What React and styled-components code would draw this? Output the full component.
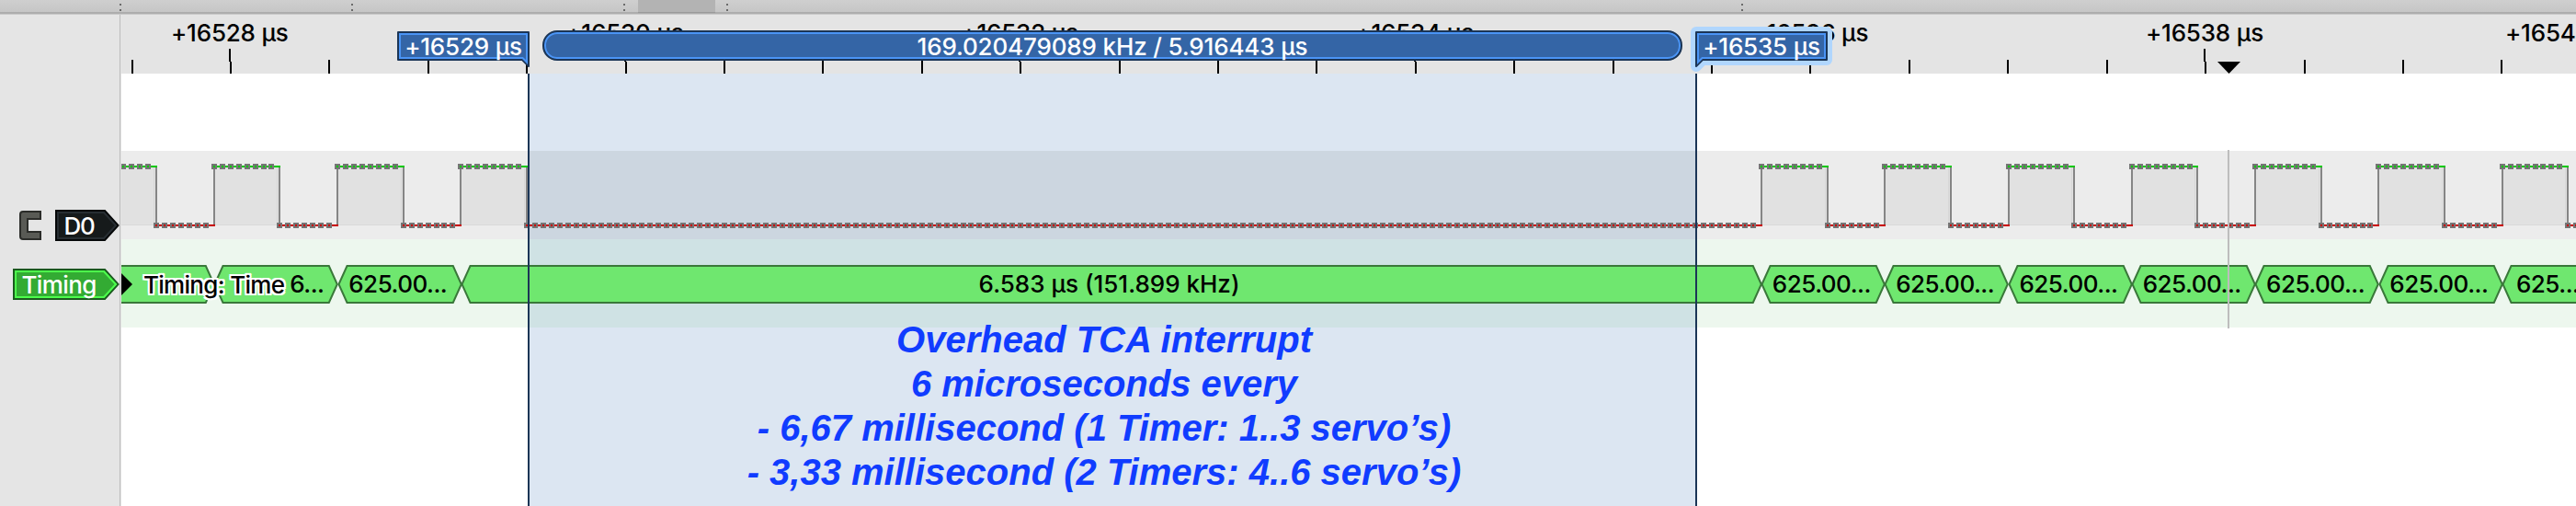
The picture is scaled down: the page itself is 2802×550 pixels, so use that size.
import React from "react";
import styled, { createGlobalStyle } from "styled-components";

const Global = createGlobalStyle`
  * { box-sizing: border-box; }
  html, body { margin: 0; padding: 0; background: #fff; overflow: hidden; }
  body { font-family: Inter, "Liberation Sans", sans-serif; font-size: 26px; color: #000; }
`;

/* Time scale, in pixels of the plot area (which begins right of the sidebar) */
const SIDEBAR = 132;
const SAMPLE_ORIGIN = 232.8 - 11 * 8.953 - SIDEBAR;
const sampleX = (k) => SAMPLE_ORIGIN + k * 8.953;
const TICK = 107.41;
const EDGES = [0, 4, 11, 19, 26, 34, 41, 49, 199, 207, 214, 222, 229, 237, 244, 252, 259, 267, 274, 282, 289, 297, 304];

const Page = styled.div`
  width: 2802px;
  height: 550px;
  display: flex;
  flex-direction: column;
  overflow: hidden;
`;

const Overview = styled.div`
  position: relative;
  flex: none;
  height: 16px;
  background: linear-gradient(#cfcfcf, #c6c6c6 13px, #adadad 13px, #adadad 15px, #c9c9c9 15px);
  svg { display: block; }
`;

const Body = styled.div`
  flex: 1;
  display: flex;
  min-height: 0;
`;

const Sidebar = styled.div`
  flex: none;
  width: ${SIDEBAR}px;
  padding-top: 212px;
  background: #e5e5e5;
  box-shadow: inset -1px 0 #e3e3e3, inset -2px 0 #bdbdbd;
  display: flex;
  flex-direction: column;
  gap: 30px;
`;

const SideRow = styled.div`
  display: flex;
  align-items: center;
  height: 34px;
  padding-left: ${(p) => p.$indent}px;
  gap: 14px;
`;

const Tag = styled.div`
  position: relative;
  width: ${(p) => p.$width}px;
  height: 34px;
  padding-left: ${(p) => p.$pad}px;
  color: #fff;
  font-weight: 500;
  font-size: 26px;
  line-height: 35px;
  letter-spacing: ${(p) => p.$spacing || 0}px;
  white-space: nowrap;
`;

const Backdrop = styled.svg`
  position: absolute;
  inset: 0;
  overflow: visible;
  z-index: 0;
`;

const Over = styled.span`
  position: relative;
  z-index: 1;
`;

const Plot = styled.div`
  position: relative;
  flex: 1;
  min-width: 0;
  overflow: hidden;
  display: flex;
  flex-direction: column;
`;

const Ruler = styled.div`
  position: relative;
  flex: none;
  height: 64px;
  background: #e4e4e4;
`;

const RulerLabels = styled.div`
  display: flex;
  margin-left: -97px;
  padding-top: 4px;
`;

const RulerLabel = styled.div`
  flex: none;
  width: ${TICK * 4}px;
  margin-left: ${(p) => p.$shift || 0}px;
  text-align: center;
  line-height: 32px;
  font-weight: 450;
  letter-spacing: -0.2px;
  white-space: nowrap;
`;

const Ticks = styled.svg`
  position: absolute;
  left: 0;
  top: 0;
`;

const Blank = styled.div`
  flex: none;
  height: 84px;
`;

const Lane = styled.div`
  position: relative;
  flex: none;
  height: 96px;
  background: ${(p) => p.$bg};
  svg { display: block; }
`;

const SelectedPart = styled.div`
  position: absolute;
  left: 444px;
  width: 1268px;
  top: ${(p) => p.$top || 0}px;
  bottom: 0;
  background: ${(p) => p.$bg};
`;

const Segments = styled.div`
  position: relative;
  display: flex;
  padding-top: 28px;
  margin-left: -33px;
`;

const Segment = styled.div`
  position: relative;
  flex: none;
  width: ${(p) => p.$width}px;
  height: 42px;
  padding: ${(p) => p.$pad || "0 4px 0 0"};
  display: flex;
  justify-content: ${(p) => p.$justify || "center"};
  line-height: 41px;
  font-weight: 500;
  letter-spacing: ${(p) => p.$spacing || 0}px;
  white-space: nowrap;
`;

const RowTitle = styled.div`
  position: absolute;
  left: 0;
  top: 28px;
  height: 42px;
  display: flex;
  align-items: center;
  gap: 12px;
  font-weight: 500;
  letter-spacing: -0.7px;
  text-shadow: 2px 0 #fff, -2px 0 #fff, 0 2px #fff, 0 -2px #fff, 2px 2px #fff, -2px -2px #fff, 2px -2px #fff, -2px 2px #fff;
`;

const Rest = styled.div`
  position: relative;
  flex: 1;
`;

const Note = styled.div`
  position: absolute;
  left: 444px;
  width: 1250px;
  top: 329px;
  text-align: center;
  font-family: "Liberation Sans", Arial, sans-serif;
  font-weight: 700;
  font-style: italic;
  font-size: 40px;
  line-height: 48px;
  color: #103cff;
  white-space: nowrap;
`;

const VLine = styled.div`
  position: absolute;
  left: ${(p) => p.$x}px;
  top: ${(p) => p.$top}px;
  width: 2px;
  height: ${(p) => p.$height}px;
  background: ${(p) => p.$color};
`;

const Flag = styled.div`
  position: absolute;
  left: ${(p) => p.$x}px;
  top: 18px;
  width: 144px;
  height: 38px;
  color: #fff;
  text-align: center;
  line-height: 33px;
  font-weight: 450;
  letter-spacing: -0.2px;
  white-space: nowrap;
`;

const Measure = styled.div`
  position: absolute;
  left: 458px;
  top: 17.4px;
  width: 1240px;
  height: 32.6px;
  border: 2px solid #1b3556;
  border-radius: 16px;
  background: #3465a6;
  box-shadow: inset 0 0 0 2px #4a94f5;
  color: #fff;
  text-align: center;
  line-height: 31px;
  font-weight: 450;
  letter-spacing: -0.15px;
  white-space: nowrap;
`;

function OverviewStrip() {
  return (
    <Overview>
      <svg width="2802" height="15">
        <rect x="694" y="0" width="84" height="13" fill="#b3b3b3" />
        <rect x="694" y="13" width="84" height="1" fill="#9a9a9a" />
        {[130, 382, 678, 790, 1894].map((x) => (
          <g key={x} fill="#6a6a6a">
            <rect x={x} y="4" width="2" height="2" />
            <rect x={x} y="10" width="2" height="2" />
          </g>
        ))}
      </svg>
    </Overview>
  );
}

function RulerTicks() {
  return (
    <Ticks width="2670" height="64">
      {Array.from({ length: 25 }, (_, i) => {
        const x = Math.floor(11 + i * TICK);
        const major = i % 4 === 1;
        return (
          <g key={i}>
            <rect x={x} y={major ? 51 : 49} width="2" height={major ? 13 : 15} />
            {major && <rect x={x - 1} y="37" width="2" height="14" />}
          </g>
        );
      })}
      <path d="M2280 51H2305L2292.5 64Z" />
    </Ticks>
  );
}

function Waveform() {
  const spans = EDGES.slice(0, -1).map((k, i) => ({ k, end: EDGES[i + 1], high: i % 2 === 0 }));
  return (
    <Ticks width="2670" height="96" shapeRendering="crispEdges">
      {spans.map(({ k, end, high }) => {
        const a = k === 0 ? 0 : Math.round(sampleX(k));
        const b = Math.round(sampleX(end));
        return high ? (
          <g key={k}>
            <rect x={a} y="18" width={b - a} height="62" fill="#e1e1e1" />
            <rect x={a} y="80" width={b - a} height="1" fill="#d9d9d9" />
            <rect x={b - 3} y="18" width="1" height="62" fill="#d7d7d7" />
          </g>
        ) : null;
      })}
      {spans.map(({ k, end, high }) => {
        const a = k === 0 ? 0 : Math.round(sampleX(k));
        const b = Math.round(sampleX(end));
        return (
          <g key={k}>
            <rect x={b - 1} y="18" width="2" height="62" fill="#858585" />
            <rect x={a - 1} y={high ? 16 : 80} width={b - a + 2} height="2" fill={high ? "#00c800" : "#c80000"} />
          </g>
        );
      })}
      {spans.map(({ k, end, high }) =>
        Array.from({ length: end - k }, (_, j) => {
          const x = Math.round(sampleX(k + j));
          const y = high ? 17 : 81;
          return (
            <g key={k + j}>
              <rect x={x - 3} y={y - 3} width="6" height="6" fill="#757575" />
              <rect x={x - 1} y={y - 1} width="2" height="2" fill={high ? "#00c800" : "#c80000"} />
            </g>
          );
        })
      )}
    </Ticks>
  );
}

function DecodedSegment({ width, children, ...rest }) {
  const w = width;
  return (
    <Segment $width={width} {...rest}>
      <Backdrop width={w} height="42">
        <path
          d={`M0.5 21L9.5 1H${w - 9.5}L${w - 0.5} 21L${w - 9.5} 41H9.5Z`}
          fill="#6fe76f"
          stroke="#3a783a"
          strokeWidth="2"
        />
      </Backdrop>
      <Over>{children}</Over>
    </Segment>
  );
}

function MarkerFlag({ x, children, mirrored, focused }) {
  const outline = mirrored ? "M1 38V1H143V31H8Z" : "M143 38V1H1V31H136Z";
  const inner = mirrored ? "M3 33.5V3H141V29H7.5Z" : "M141 33.5V3H3V29H136.5Z";
  return (
    <Flag $x={x}>
      <Backdrop width="144" height="38">
        {focused && <path d={outline} fill="#b0d6fd" stroke="#b0d6fd" strokeWidth="12" strokeLinejoin="round" />}
        <path d={outline} fill="#3465a6" stroke="#1b3556" strokeWidth="2" strokeLinejoin="round" />
        <path d={inner} fill="#3465a6" stroke="#4a94f5" strokeWidth="2" />
      </Backdrop>
      <Over>{children}</Over>
    </Flag>
  );
}

export default function App() {
  return (
    <>
      <Global />
      <Page>
        <OverviewStrip />
        <Body>
          <Sidebar>
            <SideRow $indent={21}>
              <svg width="25" height="34">
                <path
                  d="M4 2H23V10H9V24H23V32H4Q1 32 1 29V5Q1 2 4 2Z"
                  fill="#595a55"
                  stroke="#2b2c29"
                  strokeWidth="2"
                />
              </svg>
              <Tag $width={70} $pad={9.5} $spacing={-1.2}>
                <Backdrop width="70" height="34">
                  <path d="M1 1H54L68.500 17L54 33H1Z" fill="#161a1b" stroke="#050708" strokeWidth="2" />
                  <path d="M3 3H53L66 17L53 31H3Z" fill="#161a1b" stroke="#272d32" strokeWidth="2" />
                </Backdrop>
                <Over>D0</Over>
              </Tag>
            </SideRow>
            <SideRow $indent={14}>
              <Tag $width={116} $pad={9.5} $spacing={-0.6}>
                <Backdrop width="116" height="34">
                  <path d="M1 1H100L114.500 17L100 33H1Z" fill="#33ab33" stroke="#1a5a1e" strokeWidth="2" />
                  <path d="M3 3H99L112 17L99 31H3Z" fill="#33ab33" stroke="#4cff4c" strokeWidth="2" />
                </Backdrop>
                <Over>Timing</Over>
              </Tag>
            </SideRow>
          </Sidebar>
          <Plot>
            <Ruler>
              <RulerLabels>
                <RulerLabel>+16528 µs</RulerLabel>
                <RulerLabel>+16530 µs</RulerLabel>
                <RulerLabel>+16532 µs</RulerLabel>
                <RulerLabel>+16534 µs</RulerLabel>
                <RulerLabel>+16536 µs</RulerLabel>
                <RulerLabel>+16538 µs</RulerLabel>
                <RulerLabel $shift={-38}>+16540 µs</RulerLabel>
              </RulerLabels>
              <RulerTicks />
            </Ruler>
            <Blank>
              <SelectedPart $bg="#dce6f2" $top={64} />
            </Blank>
            <Lane $bg="#ececec">
              <SelectedPart $bg="#ccd6e0" />
              <Waveform />
            </Lane>
            <Lane $bg="#edf7ee">
              <SelectedPart $bg="#cfe2e4" />
              <Segments>
                <DecodedSegment width={134.3} />
                <DecodedSegment width={134.3} $justify="flex-start" $pad="0 0 0 82px" $spacing={-0.5}>6...</DecodedSegment>
                <DecodedSegment width={134.3} $spacing={-0.5}>625.00...</DecodedSegment>
                <DecodedSegment width={1414.3} $pad="0 5px 0 0">6.583 µs (151.899 kHz)</DecodedSegment>
                {[0, 1, 2, 3, 4, 5].map((i) => (
                  <DecodedSegment key={i} width={134.3} $spacing={-0.5}>625.00...</DecodedSegment>
                ))}
                <DecodedSegment width={134.3} $justify="flex-start" $pad="0 0 0 15px" $spacing={-0.5}>625...</DecodedSegment>
              </Segments>
              <RowTitle>
                <svg width="12" height="24">
                  <path d="M0 0L12 12L0 24Z" />
                </svg>
                <span>Timing: Time</span>
              </RowTitle>
            </Lane>
            <Rest>
              <SelectedPart $bg="#dce6f2" />
            </Rest>
            <Note>
              <div>Overhead TCA interrupt</div>
              <div>6 microseconds every</div>
              <div>- 6,67 millisecond (1 Timer: 1..3 servo’s)</div>
              <div>- 3,33 millisecond (2 Timers: 4..6 servo’s)</div>
            </Note>
            <VLine $x={442} $top={64} $height={470} $color="#1b3556" />
            <VLine $x={1712} $top={64} $height={470} $color="#1b3556" />
            <VLine $x={2291} $top={147} $height={194} $color="#bdbdbd" />
            <Measure>169.020479089 kHz / 5.916443 µs</Measure>
            <MarkerFlag x={300}>+16529 µs</MarkerFlag>
            <MarkerFlag x={1712} mirrored focused>+16535 µs</MarkerFlag>
          </Plot>
        </Body>
      </Page>
    </>
  );
}
